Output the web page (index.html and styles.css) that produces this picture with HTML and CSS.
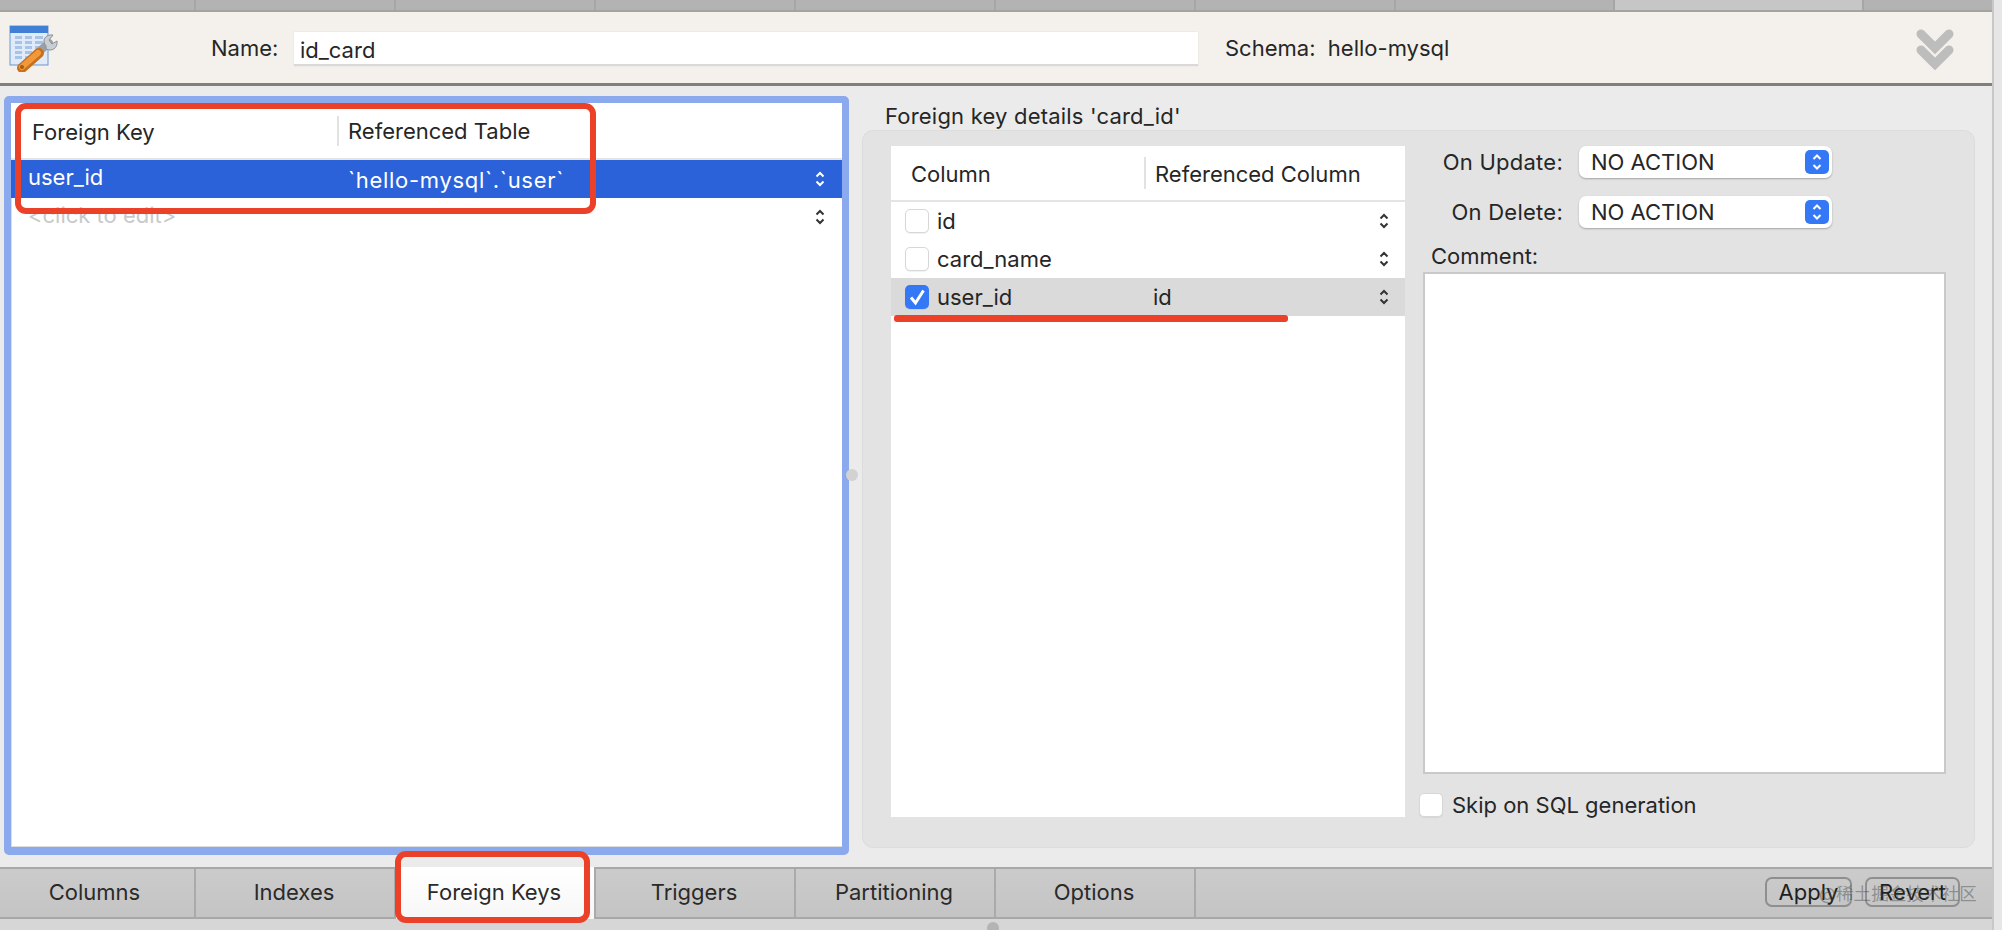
FILE: index.html
```html
<!DOCTYPE html>
<html lang="en">
<head>
<meta charset="utf-8">
<title>id_card - Foreign Keys</title>
<link rel="stylesheet" href="styles.css">
</head>
<body>
<div class="window">
  <div class="app">
    <div class="top-tabs">
      <i class="top-tab first"></i><i class="top-tab"></i><i class="top-tab"></i><i class="top-tab"></i><i class="top-tab"></i><i class="top-tab"></i><i class="top-tab"></i><i class="top-tab wide"></i><i class="top-tab active"></i><i class="top-tab last"></i>
    </div>
    <header class="header">
      <svg class="table-icon" width="50" height="50" viewBox="0 0 50 50">
        <rect x="2" y="4" width="38" height="39" fill="#dfeafa" stroke="#6d97cf"/>
        <rect x="2" y="4" width="38" height="7" fill="#3f7fd6"/>
        <g fill="#a9c3e6">
          <rect x="7" y="14" width="7" height="3"/><rect x="17" y="14" width="7" height="3"/><rect x="27" y="14" width="8" height="3"/>
          <rect x="7" y="19" width="7" height="3"/><rect x="17" y="19" width="7" height="3"/><rect x="27" y="19" width="8" height="3"/>
          <rect x="7" y="24" width="7" height="3"/><rect x="17" y="24" width="7" height="3"/><rect x="27" y="24" width="8" height="3"/>
          <rect x="7" y="29" width="7" height="3"/><rect x="17" y="29" width="7" height="3"/>
          <rect x="7" y="34" width="7" height="3"/><rect x="17" y="34" width="7" height="3"/>
        </g>
        <path d="M27 33 L41 21" stroke="#9aa0a6" stroke-width="8" stroke-linecap="round"/>
        <path d="M38 24 C33 18 38 12 45 13 L41 18 L44 22 L49 19 C50 26 44 30 38 27 Z" fill="#c9ced3" stroke="#8b9096"/>
        <path d="M14 46 L31 31" stroke="#c96f1c" stroke-width="10" stroke-linecap="round"/>
        <path d="M14 45 L30 31" stroke="#f0983a" stroke-width="6" stroke-linecap="round"/>
        <circle cx="14" cy="45" r="2" fill="#a85a12"/>
      </svg>
      <span class="label name-label">Name:</span>
      <div class="name-input">id_card</div>
      <span class="label schema">Schema:&nbsp; hello-mysql</span>
      <svg class="collapse" width="38" height="41" viewBox="0 0 38 41">
        <path d="M5 21 L19 35 L33 21" fill="none" stroke="#bdbdbd" stroke-width="9" stroke-linecap="round" stroke-linejoin="miter"/>
        <path d="M5 5 L19 19 L33 5" fill="none" stroke="#bdbdbd" stroke-width="9" stroke-linecap="round" stroke-linejoin="miter"/>
      </svg>
    </header>
    <main class="main">
      <section class="fk-pane">
        <div class="thead fk-head">
          <span class="th fk-col">Foreign Key</span>
          <span class="th fk-ref">Referenced Table</span>
        </div>
        <div class="fk-row selected">
          <span class="fk-name">user_id</span>
          <span class="fk-table">`hello-mysql`.`user`</span>
          <svg class="stepper" width="10" height="16" viewBox="0 0 10 16"><path d="M1.5 5.5 L5 2 L8.5 5.5 M1.5 10.5 L5 14 L8.5 10.5" fill="none" stroke="#fff" stroke-width="2"/></svg>
        </div>
        <div class="fk-row placeholder">
          <span class="fk-name">&lt;click to edit&gt;</span>
          <svg class="stepper" width="10" height="16" viewBox="0 0 10 16"><path d="M1.5 5.5 L5 2 L8.5 5.5 M1.5 10.5 L5 14 L8.5 10.5" fill="none" stroke="#333" stroke-width="2"/></svg>
        </div>
      </section>
      <i class="splitter"></i>
      <section class="details">
        <div class="details-title">Foreign key details 'card_id'</div>
        <div class="group">
          <div class="col-table">
            <div class="thead col-head">
              <span class="th col-col">Column</span>
              <span class="th col-ref">Referenced Column</span>
            </div>
            <div class="col-row"><i class="check"></i><span class="col-name">id</span><span class="col-target"></span>
              <svg class="stepper" width="10" height="16" viewBox="0 0 10 16"><path d="M1.5 5.5 L5 2 L8.5 5.5 M1.5 10.5 L5 14 L8.5 10.5" fill="none" stroke="#333" stroke-width="2"/></svg></div>
            <div class="col-row"><i class="check"></i><span class="col-name">card_name</span><span class="col-target"></span>
              <svg class="stepper" width="10" height="16" viewBox="0 0 10 16"><path d="M1.5 5.5 L5 2 L8.5 5.5 M1.5 10.5 L5 14 L8.5 10.5" fill="none" stroke="#333" stroke-width="2"/></svg></div>
            <div class="col-row current"><i class="check on"><svg width="24" height="24" viewBox="0 0 24 24"><path d="M6 12.5 L10.5 18 L18.5 5.5" fill="none" stroke="#fff" stroke-width="3"/></svg></i><span class="col-name">user_id</span><span class="col-target">id</span>
              <svg class="stepper" width="10" height="16" viewBox="0 0 10 16"><path d="M1.5 5.5 L5 2 L8.5 5.5 M1.5 10.5 L5 14 L8.5 10.5" fill="none" stroke="#333" stroke-width="2"/></svg></div>
          </div>
          <div class="side">
            <div class="form-row"><span class="form-label">On Update:</span>
              <div class="select">NO ACTION<span class="select-btn"><svg width="12" height="20" viewBox="0 0 12 20"><path d="M2.5 7 L6 3.5 L9.5 7 M2.5 13 L6 16.5 L9.5 13" fill="none" stroke="#fff" stroke-width="2"/></svg></span></div></div>
            <div class="form-row"><span class="form-label">On Delete:</span>
              <div class="select">NO ACTION<span class="select-btn"><svg width="12" height="20" viewBox="0 0 12 20"><path d="M2.5 7 L6 3.5 L9.5 7 M2.5 13 L6 16.5 L9.5 13" fill="none" stroke="#fff" stroke-width="2"/></svg></span></div></div>
            <div class="comment-label">Comment:</div>
            <div class="comment"></div>
            <div class="skip"><i class="check"></i><span>Skip on SQL generation</span></div>
          </div>
        </div>
      </section>
    </main>
    <nav class="bottom-tabs">
      <span class="tab first">Columns</span>
      <span class="tab">Indexes</span>
      <span class="tab active">Foreign Keys</span>
      <span class="tab">Triggers</span>
      <span class="tab">Partitioning</span>
      <span class="tab">Options</span>
      <div class="actions">
        <span class="btn apply">Apply</span>
        <span class="btn revert">Revert</span>
      </div>
    </nav>
    <footer class="footer"><i class="footer-dot"></i></footer>
  </div>
  <div class="rail"></div>
</div>
<i class="mark box-table"></i>
<i class="mark box-tab"></i>
<i class="mark underline"></i>
<span class="watermark">@稀土掘金技术社区</span>
</body>
</html>
```

FILE: styles.css
```css
* { box-sizing: border-box; }
html, body { margin: 0; padding: 0; }
body {
  position: relative;
  width: 2002px;
  height: 930px;
  overflow: hidden;
  font-family: Inter, "Liberation Sans", "Noto Sans CJK SC", sans-serif;
  font-size: 22px;
  color: #262626;
  background: #ebebeb;
}
i { display: block; font-style: normal; }
.window { display: flex; height: 930px; }
.app { width: 1994px; height: 930px; border-right: 2px solid #c8c8c8; display: flex; flex-direction: column; }
.rail { flex: 1; background: #e6e6e6; }

.top-tabs { display: flex; flex: none; height: 12px; border-bottom: 2px solid #a3a3a3; background: #b3b3b3; }
.top-tab { width: 200px; border-right: 2px solid #a6a6a6; }
.top-tab.first { width: 196px; }
.top-tab.wide { width: 219px; }
.top-tab.active { width: 249px; background: #c6c6c6; }
.top-tab.last { flex: 1; border-right: 0; }

.header { flex: none; height: 74px; display: flex; align-items: center; padding: 3px 38px 0 8px; background: #f4f1ec; border-bottom: 3px solid #7f7f7f; }
.table-icon { flex: none; margin-top: -4px; }
.label { white-space: nowrap; margin-top: -3px; }
.name-label { margin-left: 153px; width: 83px; }
.name-input { width: 904px; height: 34px; padding: 2px 0 0 6px; line-height: 32px; background: #fff; border-bottom: 2px solid #d9d9d9; box-shadow: 0 0 1px #ccc; }
.schema { margin-left: 27px; }
.collapse { margin-left: auto; flex: none; }

.main { flex: 1; display: flex; min-height: 0; }
.fk-pane { width: 845px; height: 759px; margin: 10px 0 0 4px; background: #fff; border: solid #8ba9ed; border-width: 7px 7px 8px 7px; border-radius: 5px; box-shadow: inset 0 -1px 0 #ddd, inset 1px 0 0 #ddd; }
.thead { display: flex; align-items: center; background: #fff; border-bottom: 2px solid #e4e4e4; }
.th { white-space: nowrap; }
.fk-head { height: 57px; }
.fk-col { width: 326px; padding-left: 21px; padding-top: 2px; }
.fk-ref { height: 30px; line-height: 30px; border-left: 2px solid #e2e2e2; padding-left: 9px; }
.fk-row { height: 38px; display: flex; align-items: center; position: relative; padding-right: 17px; }
.fk-name { width: 326px; padding-left: 17px; }
.fk-table { padding-left: 11px; padding-top: 2px; flex: 1; white-space: nowrap; letter-spacing: .7px; }
.fk-row .stepper { margin-left: auto; }
.selected { background: #2b62d9; color: #fff; }
.selected .fk-name { padding-bottom: 4px; }
.placeholder { color: #c9c9c9; }
.placeholder .fk-name { padding-bottom: 5px; }
.stepper { flex: none; }

.splitter { width: 12px; height: 12px; flex: none; margin: 383px -3px 0 -3px; border-radius: 50%; background: #d2d2d2; z-index: 1; }
.details { width: 1113px; margin-left: 7px; display: flex; flex-direction: column; padding-top: 10px; }
.details-title { flex: none; height: 34px; padding: 10px 0 0 23px; line-height: 20px; letter-spacing: .2px; white-space: nowrap; }
.group { flex: none; height: 718px; display: flex; padding: 15px 0 0 28px; background: #e3e3e3; border: 1px solid #dcdcdc; border-radius: 11px; }
.col-table { width: 514px; height: 671px; background: #fff; }
.col-head { height: 56px; }
.col-col { width: 253px; padding-left: 20px; padding-top: 2px; }
.col-ref { height: 32px; line-height: 34px; border-left: 2px solid #e2e2e2; padding-left: 9px; }
.col-row { height: 38px; display: flex; align-items: center; padding: 0 16px 0 14px; }
.col-row.current { background: #dadada; }
.col-name { width: 224px; padding-left: 8px; white-space: nowrap; }
.col-target { flex: 1; }
.check { flex: none; width: 24px; height: 24px; background: #fff; border: 1px solid #d7d7d7; border-radius: 5px; box-shadow: 0 1px 1px rgba(0,0,0,.06); }
.check.on { background: #3478f6; border: 0; }
.check.on svg { display: block; }

.side { margin-left: 14px; width: 540px; display: flex; flex-direction: column; }
.form-row { flex: none; height: 32px; margin-bottom: 18px; display: flex; align-items: center; }
.form-label { width: 144px; text-align: right; white-space: nowrap; letter-spacing: .25px; }
.select { margin-left: 16px; width: 253px; height: 32px; position: relative; padding-left: 12px; line-height: 32px; background: #fff; border-radius: 7px; box-shadow: 0 1px 2px rgba(0,0,0,.28); }
.select-btn { position: absolute; right: 3px; top: 4px; width: 24px; height: 24px; display: flex; align-items: center; justify-content: center; background: #3478f6; border-radius: 5px; }
.comment-label { flex: none; height: 28px; line-height: 24px; padding-left: 12px; margin-top: -2px; }
.comment { flex: none; width: 523px; height: 502px; margin-left: 4px; background: #fff; border: 2px solid #c9c9c9; }
.skip { flex: none; display: flex; align-items: center; gap: 9px; height: 24px; margin-top: 19px; }

.bottom-tabs { flex: none; height: 52px; display: flex; background: linear-gradient(#cbcbcb, #c4c4c4); border-top: 2px solid #a8a8a8; border-bottom: 2px solid #a8a8a8; padding-right: 32px; }
.tab { width: 200px; display: flex; align-items: center; justify-content: center; padding: 0 2px 2px 0; border-right: 2px solid #aaa; white-space: nowrap; color: #2a2a2a; }
.tab.first { width: 196px; padding-right: 5px; }
.tab.active { background: linear-gradient(#fff, #f7f7f7); margin-top: -2px; margin-bottom: -2px; }
.actions { margin-left: auto; display: flex; gap: 13px; align-items: center; }
.btn { display: flex; align-items: center; justify-content: center; height: 30px; border: 2px solid #8f8f8f; border-radius: 7px; color: #1f1f1f; margin-bottom: 2px; }
.apply { width: 87px; }
.revert { width: 95px; }
.footer { flex: none; height: 11px; position: relative; overflow: hidden; background: #d6d6d6; }
.footer-dot { position: absolute; left: 987px; top: 3px; width: 12px; height: 12px; border-radius: 50%; background: #b4b4b4; }

.mark { position: absolute; background: none; }
.box-table { left: 15px; top: 103px; width: 581px; height: 111px; border: 6px solid #ea4128; border-radius: 11px; }
.box-tab { left: 395px; top: 851px; width: 195px; height: 72px; border: 6px solid #ea4128; border-radius: 11px; }
.underline { left: 894px; top: 315px; width: 394px; height: 7px; background: #ea4128; border-radius: 3px; }
.watermark { position: absolute; left: 1819px; top: 880px; font-size: 17.6px; line-height: 28px; color: rgba(70,70,70,.45); white-space: nowrap; }
```
